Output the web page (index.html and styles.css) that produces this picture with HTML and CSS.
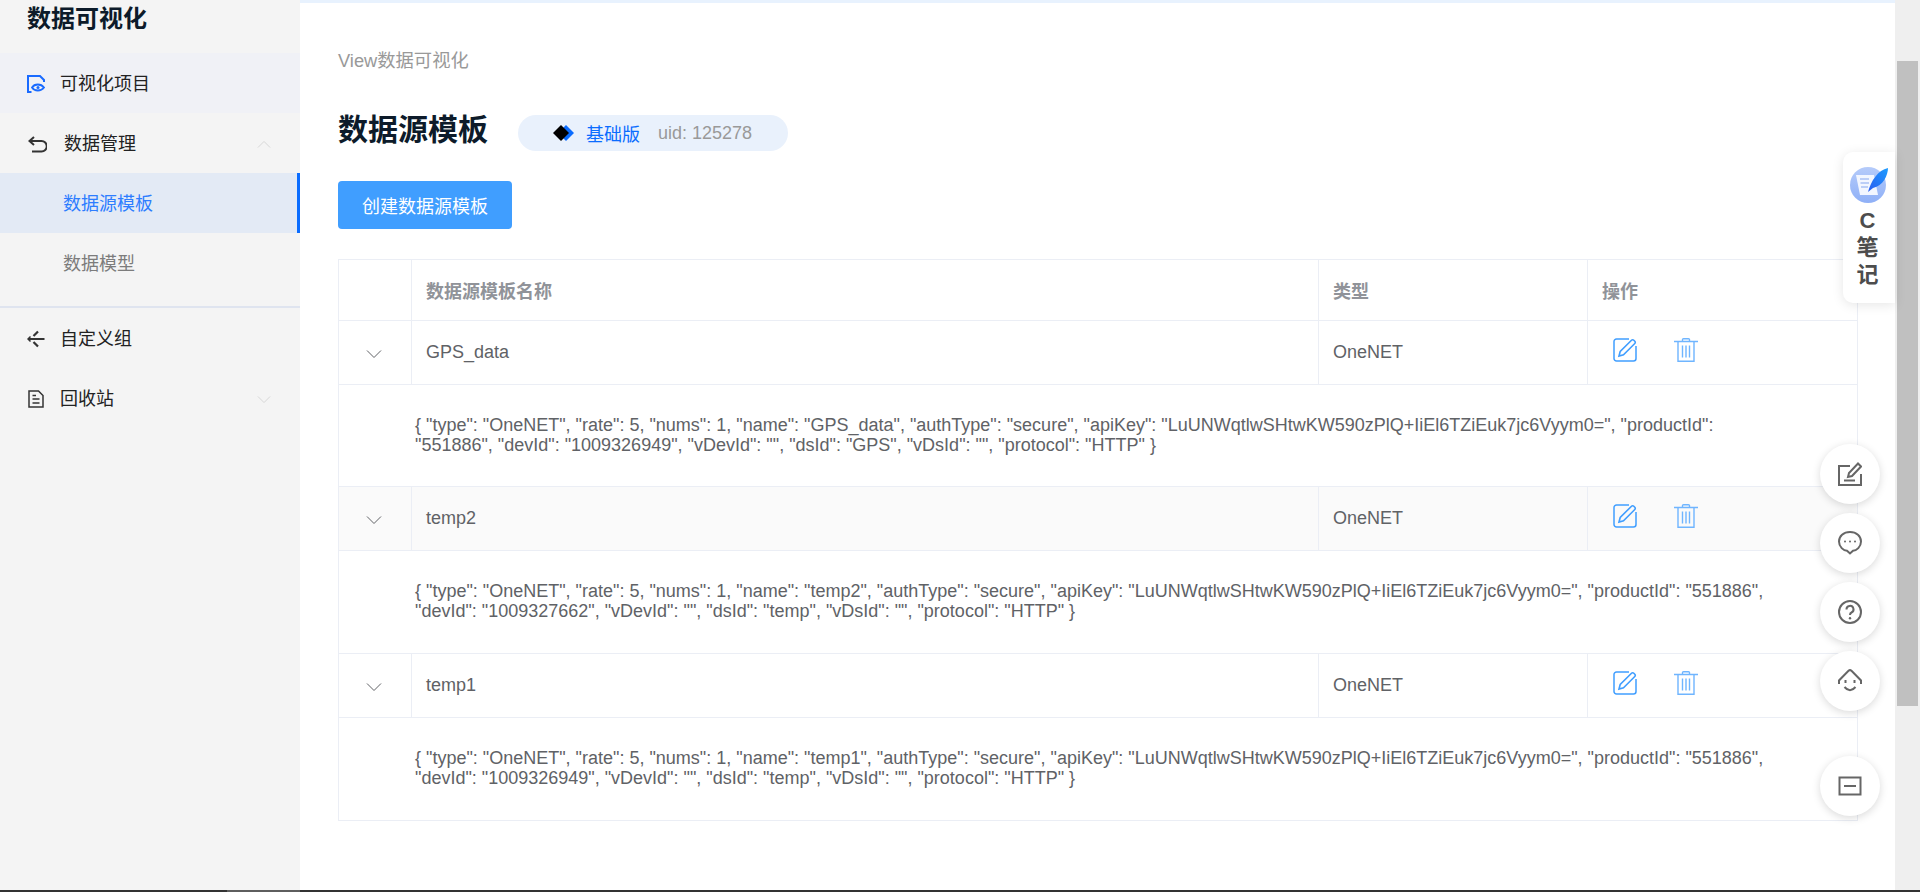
FILE: index.html
```html
<!DOCTYPE html>
<html lang="en">

<head>
    <meta charset="UTF-8">
    <meta name="viewport" content="width=device-width, initial-scale=1.0">
    <title>数据源模板</title>
    <link rel="stylesheet" href="styles.css">
</head>

<body>
    <svg class="icon-defs" aria-hidden="true">
        <symbol id="icon-edit" viewBox="0 0 24 24">
            <path d="M16 1H3.500A2.500 2.500 0 0 0 1 3.500V20.500A2.500 2.500 0 0 0 3.500 23H20.500A2.500 2.500 0 0 0 23 20.500V8" fill="none" stroke="currentColor" stroke-width="1.500" />
            <path d="M6 18l1.200-4.500L18.500 2.200a1.600 1.600 0 0 1 2.300 0l1 1a1.600 1.600 0 0 1 0 2.300L10.500 16.800z" fill="none" stroke="currentColor" stroke-width="1.600" />
        </symbol>
        <symbol id="icon-trash" viewBox="0 0 24 24">
            <path d="M0 3.500H24M8.500 3V1.500Q8.500.7 9.500.7H14.500Q15.500.7 15.500 1.500V3" fill="none" stroke="currentColor" stroke-width="1.400" />
            <path d="M4 4V23.300H20V4M8.500 7.500V19.500M12 7.500V19.500M15.500 7.500V19.500" fill="none" stroke="currentColor" stroke-width="1.400" />
        </symbol>
        <symbol id="icon-chevron" viewBox="0 0 16 10">
            <path d="M1 1.500L8 8.500L15 1.500" fill="none" stroke="currentColor" stroke-width="1" />
        </symbol>
    </svg>

    <div class="page">
        <aside class="sidebar">
            <div class="logo-title">数据可视化</div>
            <div class="menu-item menu-item-current">
                <svg class="menu-icon" width="18" height="18" viewBox="0 0 18 18">
                    <path d="M4.500 17H1V1H13L17 5V7" fill="none" stroke="#1a6bff" stroke-width="2" />
                    <path d="M5 12.500C7.500 8.500 14 8.500 17 12.500C14 16.500 7.500 16.500 5 12.500Z" fill="none" stroke="#1a6bff" stroke-width="1.800" />
                    <circle cx="11" cy="12.500" r="1.500" fill="#1a6bff" />
                </svg>
                可视化项目
            </div>
            <div class="menu-item menu-item-wide">
                <svg class="menu-icon" width="19" height="17" viewBox="0 0 19 17">
                    <path d="M6 1L1.500 5L6 9M1.500 5H13.500A4.700 4.700 0 0 1 13.500 15.500H4" fill="none" stroke="#333" stroke-width="2" />
                </svg>
                数据管理
                <svg class="menu-arrow menu-arrow-up" width="14" height="9"><use href="#icon-chevron" /></svg>
            </div>
            <div class="sub-item sub-item-active">数据源模板</div>
            <div class="sub-item">数据模型</div>
            <div class="menu-divider"></div>
            <div class="menu-item">
                <svg class="menu-icon" width="18" height="18" viewBox="0 0 18 18">
                    <path d="M1 9H17.500" stroke="#333" stroke-width="2" />
                    <path d="M3.500 6.500L1 9L3.500 11.500" fill="none" stroke="#333" stroke-width="1.500" />
                    <path d="M6.500 6L11 1.500M6.500 12L11 16.500" fill="none" stroke="#333" stroke-width="2.200" />
                </svg>
                自定义组
            </div>
            <div class="menu-item">
                <svg class="menu-icon" width="18" height="18" viewBox="0 0 18 18">
                    <path d="M2 1H11.500L16 5.500V17H2Z" fill="none" stroke="#333" stroke-width="1.500" />
                    <path d="M5.500 9H12.500M5.500 13H12.500M5.500 5.500H9" stroke="#333" stroke-width="1.300" />
                </svg>
                回收站
                <svg class="menu-arrow" width="14" height="9"><use href="#icon-chevron" /></svg>
            </div>
        </aside>

        <main class="main">
            <div class="crumb">View数据可视化</div>
            <div class="title-row">
                <h1 class="page-title">数据源模板</h1>
                <div class="plan-pill">
                    <svg class="plan-logo" width="21" height="16" viewBox="0 0 21 16">
                        <path d="M13 0L21 8L13 16L5 8Z" fill="#0a6cff" />
                        <path d="M8 0L16 8L8 16L0 8Z" fill="#000" />
                    </svg>
                    <span class="plan-name">基础版</span>
                    <span class="plan-uid">uid: 125278</span>
                </div>
            </div>
            <button class="create-btn">创建数据源模板</button>

            <table class="tpl-table">
                <colgroup>
                    <col class="col-expand">
                    <col class="col-name">
                    <col class="col-type">
                    <col>
                </colgroup>
                <thead>
                    <tr>
                        <th></th>
                        <th>数据源模板名称</th>
                        <th>类型</th>
                        <th>操作</th>
                    </tr>
                </thead>
                <tbody>
                    <tr class="data-row">
                        <td class="expand-cell"><svg class="expand-icon" width="16" height="10"><use href="#icon-chevron" /></svg></td>
                        <td>GPS_data</td>
                        <td>OneNET</td>
                        <td>
                            <div class="row-actions">
                                <svg class="act-edit" width="24" height="24"><use href="#icon-edit" /></svg>
                                <svg class="act-trash" width="24" height="24"><use href="#icon-trash" /></svg>
                            </div>
                        </td>
                    </tr>
                    <tr class="detail-row">
                        <td colspan="4">{ "type": "OneNET", "rate": 5, "nums": 1, "name": "GPS_data", "authType": "secure", "apiKey": "LuUNWqtlwSHtwKW590zPlQ+IiEl6TZiEuk7jc6Vyym0=", "productId": "551886", "devId": "1009326949", "vDevId": "", "dsId": "GPS", "vDsId": "", "protocol": "HTTP" }</td>
                    </tr>
                    <tr class="data-row data-row-striped">
                        <td class="expand-cell"><svg class="expand-icon" width="16" height="10"><use href="#icon-chevron" /></svg></td>
                        <td>temp2</td>
                        <td>OneNET</td>
                        <td>
                            <div class="row-actions">
                                <svg class="act-edit" width="24" height="24"><use href="#icon-edit" /></svg>
                                <svg class="act-trash" width="24" height="24"><use href="#icon-trash" /></svg>
                            </div>
                        </td>
                    </tr>
                    <tr class="detail-row detail-row-tall">
                        <td colspan="4">{ "type": "OneNET", "rate": 5, "nums": 1, "name": "temp2", "authType": "secure", "apiKey": "LuUNWqtlwSHtwKW590zPlQ+IiEl6TZiEuk7jc6Vyym0=", "productId": "551886", "devId": "1009327662", "vDevId": "", "dsId": "temp", "vDsId": "", "protocol": "HTTP" }</td>
                    </tr>
                    <tr class="data-row">
                        <td class="expand-cell"><svg class="expand-icon" width="16" height="10"><use href="#icon-chevron" /></svg></td>
                        <td>temp1</td>
                        <td>OneNET</td>
                        <td>
                            <div class="row-actions">
                                <svg class="act-edit" width="24" height="24"><use href="#icon-edit" /></svg>
                                <svg class="act-trash" width="24" height="24"><use href="#icon-trash" /></svg>
                            </div>
                        </td>
                    </tr>
                    <tr class="detail-row detail-row-tall">
                        <td colspan="4">{ "type": "OneNET", "rate": 5, "nums": 1, "name": "temp1", "authType": "secure", "apiKey": "LuUNWqtlwSHtwKW590zPlQ+IiEl6TZiEuk7jc6Vyym0=", "productId": "551886", "devId": "1009326949", "vDevId": "", "dsId": "temp", "vDsId": "", "protocol": "HTTP" }</td>
                    </tr>
                </tbody>
            </table>
        </main>

        <div class="scrollbar">
            <div class="scrollbar-thumb"></div>
        </div>

        <div class="note-tab">
            <svg class="note-logo" width="38" height="38" viewBox="0 0 38 38">
                <defs>
                    <linearGradient id="note-bg" x1="0" y1="0" x2="0" y2="1">
                        <stop offset="0" stop-color="#b5cbfa" />
                        <stop offset="1" stop-color="#8fb0f7" />
                    </linearGradient>
                    <linearGradient id="note-feather" x1="0" y1="1" x2="1" y2="0">
                        <stop offset="0" stop-color="#2a5cf0" />
                        <stop offset="1" stop-color="#1d9cff" />
                    </linearGradient>
                </defs>
                <circle cx="18" cy="20" r="18" fill="url(#note-bg)" />
                <path d="M6 10H24L28 30H10Z" fill="#f2f6ff" />
                <path d="M10 14H19M10.500 18H19M11 22H18" stroke="#a9c1f5" stroke-width="1.500" />
                <path d="M18 27C21 16 28 5 38 3C38 10 33 21 23 23L18 27Z" fill="url(#note-feather)" />
            </svg>
            <span class="note-text">C</span>
            <span class="note-text">笔</span>
            <span class="note-text">记</span>
        </div>

        <div class="float-tools">
            <div class="float-btn">
                <svg width="24" height="24" viewBox="0 0 24 24" fill="none" stroke="#666" stroke-width="2">
                    <path d="M12 4H1V23H23V12" />
                    <path d="M6 18.500H17" />
                    <path d="M10 15L11 11L20 1.500L23 4.500L14 14Z" />
                </svg>
            </div>
            <div class="float-btn">
                <svg width="24" height="24" viewBox="0 0 24 24" fill="none" stroke="#666" stroke-width="2">
                    <path d="M12 1C5.500 1 1 5 1 10.500C1 16 5.500 19.500 9 19.800L12 22.500L15 19.800C18.500 19.500 23 16 23 10.500C23 5 18.500 1 12 1Z" />
                    <circle cx="7" cy="10.500" r="1" fill="#666" stroke="none" />
                    <circle cx="12" cy="10.500" r="1" fill="#666" stroke="none" />
                    <circle cx="17" cy="10.500" r="1" fill="#666" stroke="none" />
                </svg>
            </div>
            <div class="float-btn">
                <svg width="24" height="24" viewBox="0 0 24 24" fill="none" stroke="#666" stroke-width="2">
                    <circle cx="12" cy="12" r="11" />
                    <path d="M8.500 9.500A3.500 3.500 0 1 1 13.500 12.500C12.500 13 12 13.700 12 15" />
                    <circle cx="12" cy="18.300" r="1.200" fill="#666" stroke="none" />
                </svg>
            </div>
            <div class="float-btn">
                <svg width="24" height="24" viewBox="0 0 24 24" fill="none" stroke="#666" stroke-width="2">
                    <path d="M1 15V11.500L10.500 1.700Q12 .5 13.500 1.700L23 11.500V15" />
                    <path d="M6.500 18Q12 24.500 17.500 18" />
                    <path d="M7.500 11V14M16.500 11V14" />
                </svg>
            </div>
            <div class="float-btn float-btn-last">
                <svg width="24" height="24" viewBox="0 0 24 24" fill="none" stroke="#666" stroke-width="2">
                    <rect x="1.500" y="3.500" width="21" height="17" />
                    <path d="M6 12H18" />
                </svg>
            </div>
        </div>
    </div>

    <div class="taskbar">
        <div class="taskbar-item"></div>
    </div>
</body>

</html>
```

FILE: styles.css
```css
* {
    box-sizing: border-box;
}

html,
body {
    margin: 0;
    padding: 0;
    height: 892px;
    overflow: hidden;
}

body {
    font-family: "Liberation Sans", "Noto Sans CJK SC", sans-serif;
    font-size: 18px;
    color: #606266;
    background-color: #fff;
}

.icon-defs {
    display: none;
}

.page {
    position: relative;
    display: flex;
    height: 890px;
}

/* left menu */

.sidebar {
    flex: 0 0 300px;
    background-color: #f4f4f4;
    color: #222;
}

.logo-title {
    height: 53px;
    padding: 2px 0 0 27px;
    font-size: 24px;
    line-height: 34px;
    font-weight: bold;
    color: #0d1b2a;
}

.menu-item {
    display: flex;
    align-items: center;
    gap: 15px;
    height: 60px;
    padding: 2px 27px 0;
    line-height: 24px;
}

.menu-item-current {
    background-color: #f0f1f6;
}

.menu-item-wide {
    gap: 17px;
    padding-left: 28px;
}

.menu-icon {
    flex: none;
}

.menu-arrow {
    margin-left: auto;
    margin-right: 2px;
    color: #d4d4d4;
}

.menu-arrow-up {
    transform: rotate(180deg);
}

.sub-item {
    height: 60px;
    padding-left: 63px;
    line-height: 62px;
    color: #7c7c7c;
}

.sub-item-active {
    background-color: #e3eaf5;
    border-right: 3px solid #0a6cff;
    color: #2e7dff;
}

.menu-divider {
    height: 2px;
    margin-top: 13px;
    background-color: #dfe4ef;
}

/* main area */

.main {
    flex: 1;
    min-width: 0;
    padding: 46px 38px 0;
    border-top: 3px solid #e8f2fe;
}

.crumb {
    font-size: 18.3px;
    line-height: 24px;
    color: #999;
}

.title-row {
    display: flex;
    align-items: flex-start;
    margin-top: 42px;
}

.page-title {
    margin: 0;
    font-size: 30px;
    line-height: 30px;
    font-weight: bold;
    color: #0d1b2a;
}

.plan-pill {
    display: flex;
    align-items: center;
    height: 36px;
    margin-left: 30px;
    padding: 0 36px 0 35px;
    border-radius: 18px;
    background-color: #e9f1fc;
}

.plan-logo {
    margin-right: 12px;
}

.plan-name {
    margin-right: 18px;
    color: #0a6cff;
}

.plan-uid {
    color: #999;
}

.create-btn {
    display: block;
    width: 174px;
    height: 48px;
    margin-top: 30px;
    padding: 0;
    border: 0;
    border-radius: 4px;
    background-color: #409eff;
    color: #fff;
    font-family: inherit;
    font-size: 18px;
}

.tpl-table {
    width: 1520px;
    margin-top: 30px;
    table-layout: fixed;
    border-collapse: separate;
    border-spacing: 0;
    border: 1px solid #ebeef5;
    border-bottom: 0;
}

.col-expand {
    width: 73px;
}

.col-name {
    width: 907px;
}

.col-type {
    width: 269px;
}

.tpl-table th,
.data-row td {
    padding: 0 14px;
    text-align: left;
    border-bottom: 1px solid #ebeef5;
}

.tpl-table th:not(:last-child),
.data-row td:not(:last-child) {
    border-right: 1px solid #ebeef5;
}

.tpl-table th {
    height: 61px;
    font-weight: bold;
    color: #909399;
}

.data-row td {
    height: 64px;
}

.data-row-striped td {
    background-color: #fafafa;
}

.tpl-table .expand-cell {
    padding: 2px 2px 0 0;
    text-align: center;
}

.expand-icon {
    color: #606266;
}

.row-actions {
    display: flex;
    gap: 37px;
    padding: 0 0 5px 11px;
}

.act-edit {
    color: #409eff;
}

.act-trash {
    color: #6fb5ff;
}

.detail-row td {
    height: 102px;
    padding: 0 76px 2px;
    line-height: 20px;
    border-bottom: 1px solid #ebeef5;
}

.detail-row-tall td {
    height: 103px;
}

/* page scrollbar */

.scrollbar {
    flex: 0 0 25px;
    padding: 61px 2px 0;
    background-color: #efefef;
}

.scrollbar-thumb {
    height: 645px;
    background-color: #c0c0c0;
}

/* things floating over the page */

.note-tab {
    position: absolute;
    top: 152px;
    right: 25px;
    display: flex;
    flex-direction: column;
    align-items: center;
    width: 52px;
    height: 151px;
    padding-top: 13px;
    border-radius: 10px 0 0 10px;
    background-color: #fff;
    box-shadow: 0 2px 12px rgba(0, 0, 0, 0.1);
}

.note-logo {
    margin-bottom: 4px;
}

.note-text {
    margin-right: 3px;
    font-size: 22px;
    line-height: 27px;
    font-weight: bold;
    color: #4d4d4d;
}

.float-tools {
    position: absolute;
    top: 444px;
    right: 40px;
    display: flex;
    flex-direction: column;
    gap: 9px;
}

.float-btn {
    display: flex;
    align-items: center;
    justify-content: center;
    width: 60px;
    height: 60px;
    border-radius: 50%;
    background-color: #fff;
    box-shadow: 0 2px 8px rgba(0, 0, 0, 0.15);
}

.float-btn-last {
    margin-top: 36px;
}

/* strip of the window below the page */

.taskbar {
    height: 2px;
    padding-left: 227px;
    background-color: #333;
}

.taskbar-item {
    width: 73px;
    height: 2px;
    background-color: #5e5e5e;
}
```
